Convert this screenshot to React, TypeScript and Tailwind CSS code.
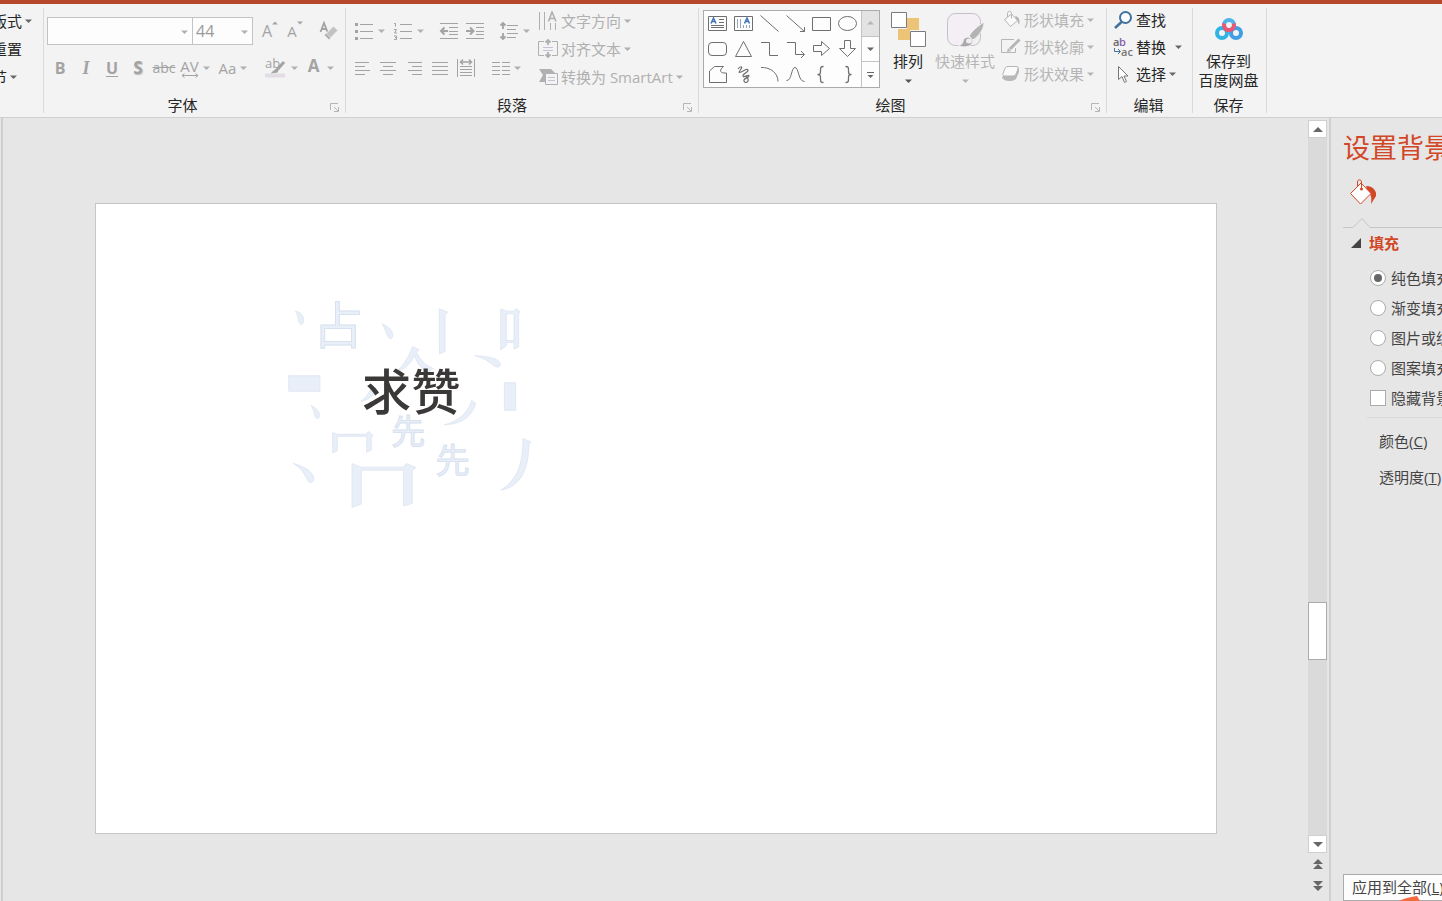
import React from 'react';

type Kids = { children?: React.ReactNode };

function Svg({ w, h, children, className = '' }: { w: number; h: number; className?: string } & Kids) {
  return (
    <svg
      width={w}
      height={h}
      viewBox={`0 0 ${w} ${h}`}
      fill="none"
      stroke="currentColor"
      aria-hidden="true"
      className={`shrink-0 ${className}`}
    >
      {children}
    </svg>
  );
}

function Caret({ className = '' }: { className?: string }) {
  return (
    <Svg w={7} h={4} className={className}>
      <path d="M0 0.5h7l-3.500 3.500z" fill="currentColor" stroke="none" />
    </Svg>
  );
}

function Sep() {
  return <span className="w-px h-6 bg-[#dcdcdc] shrink-0" />;
}

function Group({ label, launcher, className = '', children }: { label: string; launcher?: boolean; className?: string } & Kids) {
  return (
    <section className={`relative flex flex-col shrink-0 border-r border-[#dadada] ${className}`}>
      <div className="flex-1">{children}</div>
      <h2 className="h-4 leading-4 text-center">{label}</h2>
      {launcher && (
        <button aria-label={`${label}设置`} className="absolute right-[5px] bottom-px text-[#b5b5b5]">
          <Svg w={10} h={10}>
            <path d="M0.5 8V1.5H8M4 5l4 4M8.5 5v4.5H4" />
          </Svg>
        </button>
      )}
    </section>
  );
}

function Tool({ label, caret, className = 'w-[26px]', children }: { label: string; caret?: boolean; className?: string } & Kids) {
  return (
    <button aria-label={label} className={`h-6 flex items-center justify-center gap-1 shrink-0 text-[#a3a3a3] ${className}`}>
      {children}
      {caret && <Caret className="text-[#b0b0b0]" />}
    </button>
  );
}

function Row({ text, caret = true, className = '', caretClass = '', children }: { text: string; caret?: boolean; className?: string; caretClass?: string } & Kids) {
  return (
    <button className={`flex items-center gap-[3px] whitespace-nowrap leading-5 ${className}`}>
      {children}
      <span>{text}</span>
      {caret && <Caret className={caretClass} />}
    </button>
  );
}

const BAR_ROWS = [3, 7, 11, 15];

function Bars({ spans }: { spans: [number, number][] }) {
  return (
    <Svg w={18} h={18}>
      {spans.map(([a, b], i) => (
        <path key={i} d={`M${a} ${BAR_ROWS[i] + 0.5}H${b}`} />
      ))}
    </Svg>
  );
}

function FontGroup() {
  return (
    <Group label="字体" launcher className="w-[302px] pr-6">
      <div className="flex items-center pt-[9px] pl-[3px]">
        <div className="relative w-[146px] h-7 border border-[#c3c3c3] bg-[#fdfdfd] shrink-0 text-[#b0b0b0]">
          <select aria-label="字体名称" className="appearance-none w-full h-full px-1">
            <option value="" />
          </select>
          <Caret className="absolute right-1 top-3" />
        </div>
        <div className="relative w-[60px] h-7 border border-l-0 border-[#c3c3c3] bg-[#fdfdfd] shrink-0 text-[#b0b0b0]">
          <select aria-label="字号" className="appearance-none w-full h-full px-[3px] text-base text-[#9a9a9a]">
            <option>44</option>
          </select>
          <Caret className="absolute right-1 top-3" />
        </div>
        <Tool label="增大字号" className="w-[26px] ml-1">
          <span className="flex items-start text-base leading-5 font-medium">
            A
            <Svg w={6} h={4}><path d="M0 3.5L3 0.5 6 3.5z" fill="currentColor" stroke="none" /></Svg>
          </span>
        </Tool>
        <Tool label="减小字号" className="w-6">
          <span className="flex items-start text-[15px] leading-5 font-medium">
            A
            <Svg w={6} h={4}><path d="M0 0.5L3 3.5 6 0.5z" fill="currentColor" stroke="none" /></Svg>
          </span>
        </Tool>
        <span className="ml-1"><Sep /></span>
        <Tool label="清除格式" className="w-9">
          <Svg w={20} h={20}>
            <path d="M1.500 11L5 2l3.500 9M3 8h4.500" strokeWidth="1.800" />
            <path d="M7 12.500L14.500 5l4.500 4.500-7.500 7.500z" fill="#c2c2c2" stroke="#f3f3f3" />
            <path d="M5.500 14l1.500-1.500 4.500 4.500-1.500 1.500z" fill="#adadad" stroke="none" />
          </Svg>
        </Tool>
      </div>
      <div className="flex items-center pt-[11px] pl-[3px]">
        <Tool label="加粗"><b className="text-base">B</b></Tool>
        <Tool label="倾斜"><i className="text-lg font-bold font-['Liberation_Serif',serif]">I</i></Tool>
        <Tool label="下划线"><span className="text-base font-bold underline underline-offset-2">U</span></Tool>
        <Tool label="文字阴影"><b className="text-[17px] [text-shadow:1px_1px_1px_#bbb]">S</b></Tool>
        <Tool label="删除线"><s className="text-sm font-medium">abc</s></Tool>
        <Tool label="字符间距" caret className="w-9">
          <span className="flex flex-col items-center">
            <span className="text-[15px] leading-[14px] font-medium">AV</span>
            <Svg w={18} h={5}><path d="M1 2.500h16M3.500 0.500l-2.500 2 2.500 2M14.500 0.500l2.500 2-2.500 2" /></Svg>
          </span>
        </Tool>
        <Tool label="更改大小写" caret className="w-10"><span className="font-medium">Aa</span></Tool>
        <span className="mx-1"><Sep /></span>
        <Tool label="突出显示" caret className="w-10">
          <Svg w={22} h={22}>
            <text x="0" y="11" fontSize="13" fontWeight="500" fill="currentColor" stroke="none">ab</text>
            <path d="M19 5l-8 9" strokeWidth="3" />
            <path d="M10.500 12.500l-4 3.500 6-1z" fill="currentColor" />
            <path d="M0 18.500h20" stroke="#e2dce4" strokeWidth="4" />
          </Svg>
        </Tool>
        <Tool label="字体颜色" caret className="w-10 gap-2">
          <span className="text-[17px] leading-5 font-bold pb-1">A</span>
        </Tool>
      </div>
    </Group>
  );
}

function ParagraphGroup() {
  return (
    <Group label="段落" launcher className="w-[353px] pr-5">
      <div className="flex pl-1">
        <div className="w-[188px] shrink-0">
          <div className="flex items-center pt-[11px]">
            <Tool label="项目符号" caret className="w-[38px]">
              <Svg w={20} h={18}>
                <path d="M6 2.500h13M6 9.500h13M6 16.500h13" />
                <path d="M1 2.500h3M1 9.500h3M1 16.500h3" strokeWidth="3" />
              </Svg>
            </Tool>
            <Tool label="编号" caret className="w-10">
              <Svg w={20} h={18}>
                <path d="M7 2.500h12M7 9.500h12M7 16.500h12" />
                <path d="M1 1.500h1.500v3M1 7.500h2.500l-2 3.500H4M1 14h2.500v3.500H1M2 15.500h1" />
              </Svg>
            </Tool>
            <span className="mx-1"><Sep /></span>
            <Tool label="减少缩进">
              <Svg w={20} h={18}>
                <path d="M1 1.500h18M10 5.500h9M10 9.500h9M10 12.500h9M1 16.500h18" />
                <path d="M9 9H3M5.500 5.500L2 9l3.500 3.500" strokeWidth="2" />
              </Svg>
            </Tool>
            <Tool label="增加缩进">
              <Svg w={20} h={18}>
                <path d="M1 1.500h18M11 5.500h8M11 9.500h8M11 12.500h8M1 16.500h18" />
                <path d="M1 9h7M5 5.500L8.500 9 5 12.500" strokeWidth="2" />
              </Svg>
            </Tool>
            <span className="mx-1"><Sep /></span>
            <Tool label="行距" caret className="w-9">
              <Svg w={20} h={20}>
                <path d="M8 4.500h11M8 8.500h9M8 12.500h11M8 16.500h9" />
                <path d="M4 2v6M4 12v6M1.500 4.500L4 2l2.500 2.500M1.500 15.500L4 18l2.500-2.500" strokeWidth="1.800" />
              </Svg>
            </Tool>
          </div>
          <div className="flex items-center pt-[13px] pl-0.5">
            <Tool label="左对齐" className="w-5"><Bars spans={[[2, 16], [2, 12], [2, 17], [2, 12]]} /></Tool>
            <Tool label="居中" className="w-8"><Bars spans={[[1, 17], [4, 14], [1, 17], [4, 14]]} /></Tool>
            <Tool label="右对齐" className="w-5"><Bars spans={[[3, 17], [7, 17], [3, 17], [7, 17]]} /></Tool>
            <Tool label="两端对齐" className="w-8"><Bars spans={[[1, 17], [1, 17], [1, 17], [1, 17]]} /></Tool>
            <Tool label="分散对齐" className="w-5">
              <Svg w={20} h={20}>
                <path d="M1.500 1v18M18.500 1v18M4 8.500h12M4 11.500h12M4 14.500h12M4 17.500h12" />
                <path d="M4 4h12M7 1.500L4.500 4 7 6.500M13 1.500L15.500 4 13 6.500" strokeWidth="1.500" />
              </Svg>
            </Tool>
            <span className="ml-2 mr-1"><Sep /></span>
            <Tool label="分栏" caret className="w-9">
              <Svg w={18} h={18}>
                <path d="M0 3.500h8M0 7.500h8M0 11.500h8M0 15.500h8M10 3.500h8M10 7.500h8M10 11.500h8M10 15.500h8" />
              </Svg>
            </Tool>
          </div>
        </div>
        <div className="flex flex-col gap-2 pt-[3px] text-[#b0b0b0]">
          <Row text="文字方向">
            <Svg w={20} h={20}>
              <path d="M1.500 1v18M6.500 1v18M12.500 12v7M17.500 12v7" />
              <path d="M10.500 10.500L14 1l4 9.500M12 7.500h4.500" strokeWidth="1.600" />
            </Svg>
          </Row>
          <Row text="对齐文本">
            <Svg w={20} h={20}>
              <path d="M6 2.500H0.500v14H6M14 2.500h5.500v14H14" />
              <path d="M5 8.500h10M5 11.500h10" stroke="#cdbfd3" />
              <path d="M10 1v5M7.500 3.500L10 1l2.500 2.500M10 13v5M7.500 15.500L10 18l2.500-2.500" strokeWidth="1.800" />
            </Svg>
          </Row>
          <Row text="转换为 SmartArt">
            <Svg w={20} h={20}>
              <path d="M1 2h12l4 4h-6v3H7v6H1l4-7z" fill="#b0b0b0" stroke="none" />
              <path d="M7.500 6.500h12v11h-12z" fill="#f3f3f3" />
              <path d="M10 10.500h7M10 13.500h7" stroke="#cdbfd3" />
            </Svg>
          </Row>
        </div>
      </div>
    </Group>
  );
}

const SHAPES: { name: string; art: React.ReactNode }[] = [
  {
    name: '文本框',
    art: (
      <>
        <path d="M1.500 3.500h18v14h-18z" />
        <path d="M12 6.500h5M12 9.500h5M4 12.500h13M4 14.500h13" />
        <path d="M4 10.500L6.500 5l2.500 5.500M5 8.500h3" stroke="#3f74b5" strokeWidth="1.500" />
      </>
    ),
  },
  {
    name: '竖排文本框',
    art: (
      <>
        <path d="M1.500 3.500h18v14h-18z" />
        <path d="M4.500 6v9M7.500 6v9M10.500 12v3M13.500 12v3M16.500 12v3" stroke="#92a5bd" />
        <path d="M11.500 10.500L14 5l2.500 5.500M12.500 8.500h3" stroke="#3f74b5" strokeWidth="1.500" />
      </>
    ),
  },
  { name: '直线', art: <path d="M1.500 2.500l18 16" /> },
  { name: '箭头', art: <path d="M1.500 2.500l18 16M19.500 14v4.500H15" /> },
  { name: '矩形', art: <path d="M1.500 4.500h18v13h-18z" /> },
  { name: '椭圆', art: <ellipse cx="10.500" cy="10.500" rx="9" ry="7" /> },
  { name: '圆角矩形', art: <rect x="1.500" y="4.500" width="18" height="13" rx="3.500" /> },
  { name: '三角形', art: <path d="M10.500 3.500l8 15h-16z" /> },
  { name: '肘形连接符', art: <path d="M2 4.500h8.500v13H19" /> },
  { name: '肘形箭头', art: <path d="M2 4.500h8.500v12H19M16 13l3.500 3.500L16 20" /> },
  { name: '右箭头', art: <path d="M2.500 7.500h8v-4l8 7-8 7v-4h-8z" /> },
  { name: '下箭头', art: <path d="M7.500 2.500h6v8h5l-8 8-8-8h5z" /> },
  { name: '任意多边形', art: <path d="M2.500 18.500V7l5-4.500h9c-4 3.500-4 6 .5 6.500h2.500v9.500z" /> },
  {
    name: '自由曲线',
    art: <path d="M5 5c2-3 5-3 3 0s-3 4 0 3 6-4 7-2-6 4-5 6 6-2 6 0-6 2-5 5 5 1 4-2-3-3-5-2" strokeWidth="1.200" />,
  },
  { name: '弧形', art: <path d="M2 3.500c10-.5 17 6 17 14" /> },
  { name: '曲线', art: <path d="M1.500 16.500C7 17 6 3.500 10 3.500S13 17.500 19.500 17.500" /> },
  { name: '左大括号', art: <path d="M12.500 2.500c-3 0-3 1-3 4s0 4-3 4c3 0 3 1 3 4s0 4 3 4" strokeWidth="1.300" /> },
  { name: '右大括号', art: <path d="M8.500 2.500c3 0 3 1 3 4s0 4 3 4c-3 0-3 1-3 4s0 4-3 4" strokeWidth="1.300" /> },
];

function DrawingGroup() {
  return (
    <Group label="绘图" launcher className="w-[408px] pr-6">
      <div className="flex pl-1">
        <div className="mt-0.5 flex h-[78px] w-[177px] shrink-0 border border-[#ababab] bg-[#fdfdfd]">
          <div className="grid grid-cols-6 flex-1 text-[#6f6f6f]">
            {SHAPES.map((s) => (
              <button key={s.name} aria-label={s.name} className="flex items-center justify-center">
                <Svg w={21} h={21}>{s.art}</Svg>
              </button>
            ))}
          </div>
          <div className="w-[18px] flex flex-col border-l border-[#c3c3c3] divide-y divide-[#c3c3c3] text-[#666]">
            <button aria-label="上一行" className="flex-1 flex items-center justify-center bg-[#e3e3e3] text-[#b5b5b5]">
              <Caret className="rotate-180" />
            </button>
            <button aria-label="下一行" className="flex-1 flex items-center justify-center"><Caret /></button>
            <button aria-label="其他形状" className="flex-1 flex items-center justify-center">
              <Svg w={7} h={8}>
                <path d="M0 1.500h7" />
                <path d="M0.500 4h6l-3 3z" fill="currentColor" stroke="none" />
              </Svg>
            </button>
          </div>
        </div>
        <button className="ml-2 mt-1 w-10 h-[78px] flex flex-col items-center text-[#555] shrink-0">
          <Svg w={36} h={36}>
            <path d="M17 6h12v12H17zM8 17h12v11H8z" fill="#edc477" stroke="none" />
            <path d="M1.500 0.500h15v15h-15zM20.500 19.500h15v15h-15z" fill="#fff" stroke="#7c7c7c" />
          </Svg>
          <span className="mt-[3px] leading-5 text-[#262626] whitespace-nowrap">排列</span>
          <Caret className="mt-2" />
        </button>
        <button className="ml-1.5 mt-1 w-[62px] h-[78px] flex flex-col items-center text-[#b5b5b5] shrink-0">
          <Svg w={38} h={36}>
            <rect x="1.500" y="1.500" width="33" height="32" rx="8" fill="#f3eff5" stroke="#c4bfc6" />
            <path d="M38 10c-6 4-12 9-15 14l4 4c6-4 10-10 11-16z" fill="#b3b3b3" stroke="#f3f3f3" />
            <path d="M23 25c-5 0-6 3-6 5-1 2-3 4-5 4 7 2 15 1 15-6z" fill="#aaa" stroke="#f3f3f3" />
            <ellipse cx="23" cy="29" rx="3" ry="2.500" fill="#eee" stroke="none" />
          </Svg>
          <span className="mt-[3px] leading-5 whitespace-nowrap">快速样式</span>
          <Caret className="mt-2" />
        </button>
        <div className="ml-[5px] flex flex-col gap-[7px] pt-0.5 text-[#b5b5b5]">
          <Row text="形状填充">
            <Svg w={20} h={20}>
              <path d="M3.500 9.500l7-5.500 6 6.500-7 6z" fill="#fafafa" />
              <path d="M6.500 7V3.500c0-3 4-3 4 0v5" />
              <path d="M14 6c5 1 5 5 4 9-1-2-1-4-3-6z" fill="currentColor" stroke="none" />
            </Svg>
          </Row>
          <Row text="形状轮廓">
            <Svg w={20} h={20}>
              <path d="M13 2.500H0.500v13h14V11" />
              <path d="M18.500 2.500L9 12" strokeWidth="3" />
              <path d="M6 15l1-4 3 3z" fill="currentColor" stroke="none" />
            </Svg>
          </Row>
          <Row text="形状效果">
            <Svg w={20} h={20}>
              <path d="M1 13c1 5 11 5 14 2l3-7V4l-3-2z" fill="#b8b8b8" stroke="none" />
              <path d="M7 2.500h8c2 0 2.500 1 2 2.500l-2 5c-.5 1.500-1.500 2-3 2H4c-2 0-2.500-1-2-2.500l2-5c.5-1.500 1.500-2 3-2z" fill="#fafafa" />
            </Svg>
          </Row>
        </div>
      </div>
    </Group>
  );
}

function EditGroup() {
  return (
    <Group label="编辑" className="w-[86px] pr-0.5">
      <div className="flex flex-col items-start gap-[7px] pt-0.5 pl-1.5">
        <Row text="查找" caret={false}>
          <Svg w={20} h={20}>
            <circle cx="12.500" cy="7.500" r="5.500" fill="#fafcff" stroke="#41719c" strokeWidth="2" />
            <path d="M8.500 12L2 18" stroke="#41719c" strokeWidth="2.500" />
          </Svg>
        </Row>
        <Row text="替换" caretClass="ml-1.5 text-[#666]">
          <Svg w={20} h={20}>
            <g stroke="none" fontSize="11" fontWeight="600">
              <text x="0" y="9" fill="#666">a</text>
              <text x="6" y="9" fill="#8660a9">b</text>
              <text x="8" y="19" fill="#777">ac</text>
            </g>
            <path d="M1.500 11v3.500H7M5 12l2.500 2.500L5 17" stroke="#41719c" />
          </Svg>
        </Row>
        <Row text="选择" caretClass="text-[#666]">
          <Svg w={20} h={20}>
            <path d="M5.500 2.500v13l3.500-3 2.500 6 2-1-2.500-5.500h4z" fill="#fff" stroke="#777" />
          </Svg>
        </Row>
      </div>
    </Group>
  );
}

function SaveGroup() {
  return (
    <Group label="保存" className="w-[74px] pr-0.5">
      <button className="w-full flex flex-col items-center pt-2 leading-[19px]">
        <Svg w={28} h={26} className="mb-2.5">
          <circle cx="14" cy="9" r="5" stroke="#4cb4ea" strokeWidth="4" />
          <circle cx="7" cy="17" r="5" stroke="#2fb4e4" strokeWidth="4" />
          <circle cx="21" cy="17" r="5" stroke="#3f9fe6" strokeWidth="4" />
          <path d="M9.300 7.500a5 5 0 1 0 9.400 0" stroke="#ee5570" strokeWidth="4" />
        </Svg>
        <span>保存到</span>
        <span>百度网盘</span>
      </button>
    </Group>
  );
}

function Ribbon() {
  return (
    <header className="shrink-0 border-t-4 border-t-[#b7472a] border-b border-b-[#cfcfcf] bg-[#f3f3f3] overflow-hidden">
      <div className="flex h-[113px] pt-1 pb-1">
        <section className="w-11 shrink-0 border-r border-[#dadada] overflow-hidden">
          <div className="-ml-2 flex flex-col items-start gap-2 pt-[3px]">
            <Row text="版式" caretClass="text-[#666]" />
            <Row text="重置" caret={false} />
            <Row text="节" caretClass="text-[#666]" />
          </div>
        </section>
        <FontGroup />
        <ParagraphGroup />
        <DrawingGroup />
        <EditGroup />
        <SaveGroup />
      </div>
    </header>
  );
}

/* Loose strokes scattered round the title, in a 870 x 690 box */
function Strokes() {
  return (
    <g fill="#e9eff8" stroke="#d8e1ef" strokeWidth="2">
      <path d="M78 64c18 2 28 18 24 34-4 10-12 8-14-4-2-12-4-20-10-30z" />
      <path d="M338 102c20 8 36 22 32 40-6 12-14 2-18-10-4-12-8-22-14-30z" />
      <path d="M510 57l26 10-8 8v110l-17 8z" />
      <path d="M695 57l17 7h24l5-8 13 10-5 6v100l-14 6v-20h-23v10l-17 13zM712 72v80h23V72z" fillRule="evenodd" />
      <path d="M380 248c26-24 40-50 50-78l20 10-8 8c12 22 26 38 50 48l-14 14c-24-12-36-34-42-52-12 24-28 40-56 50z" />
      <path d="M618 198c40 2 72 8 76 24 0 14-14 12-22 4-14-12-30-22-54-28z" />
      <path d="M58 258h94v47H58zM706 279h34v83h-34z" />
      <path d="M125 348c18 8 28 20 25 34-4 10-12 4-14-6-2-12-6-20-11-28z" />
      <path d="M275 335c14-10 22-22 28-34l14 10c-10 12-24 20-42 24z" />
      <path d="M190 429l14 5h86l8-8 14 12-6 6v38l-14 6v-48h-88v44l-14 6z" />
      <path d="M608 332l12 10c-12 38-40 62-95 64 44-12 72-36 83-74z" />
      <path d="M762 447l24 10-6 8c-2 70-20 126-85 137 50-30 67-78 67-155z" />
      <path d="M72 522c34 8 64 28 61 48-4 16-16 10-22-4-8-18-20-32-39-44z" />
      <path d="M248 522l26 11h126l12-11 28 12-11 10v98l-26 8V542H276v102l-28 10z" />
      <g fontWeight="400" strokeWidth="3">
        <text x="132" y="164" fontSize="150">占</text>
        <text x="366" y="462" fontSize="102">先</text>
        <text x="500" y="551" fontSize="102">先</text>
      </g>
    </g>
  );
}

function Slide() {
  return (
    <div className="w-[86%] aspect-[16/9] border border-[#c6c6c6] bg-white">
      <svg viewBox="0 0 1120 630" className="w-full h-full">
        <svg x="173" y="86" width="290" height="230" viewBox="0 0 870 690">
          <Strokes />
          <text x="278" y="362" fontSize="148" fontWeight="500" fill="#3b3838">求赞</text>
        </svg>
      </svg>
    </div>
  );
}

function ScrollBar() {
  const btn = 'h-[18px] flex items-center justify-center border border-[#cfcfcf] bg-white';
  return (
    <div className="w-[21px] shrink-0 flex flex-col pt-0.5 pb-1 pr-0.5 text-[#666]">
      <div className="flex-1 flex flex-col bg-[#dadada]">
        <button aria-label="向上滚动" className={btn}>
          <Svg w={10} h={5}><path d="M0 5l5-5 5 5z" fill="currentColor" stroke="none" /></Svg>
        </button>
        <div className="grow-[464]" />
        <div className="h-[58px] border border-[#ababab] bg-white" />
        <div className="grow-[175]" />
        <button aria-label="向下滚动" className={btn}>
          <Svg w={10} h={5}><path d="M0 0l5 5 5-5z" fill="currentColor" stroke="none" /></Svg>
        </button>
      </div>
      <button aria-label="上一张幻灯片" className="h-[22px] flex items-center justify-center">
        <Svg w={10} h={10}><path d="M0 5l5-5 5 5zM0 10l5-5 5 5z" fill="currentColor" stroke="none" /></Svg>
      </button>
      <button aria-label="下一张幻灯片" className="h-[22px] flex items-center justify-center">
        <Svg w={10} h={10}><path d="M0 0l5 5 5-5zM0 5l5 5 5-5z" fill="currentColor" stroke="none" /></Svg>
      </button>
    </div>
  );
}

const FILLS = ['纯色填充', '渐变填充', '图片或纹理填充', '图案填充'];

function FormatPane() {
  return (
    <aside className="w-[113px] shrink-0 flex flex-col border-l-2 border-[#d0d0d0] pl-3 overflow-hidden whitespace-nowrap text-[#444]">
      <h1 className="mt-3 text-[27px] leading-9 text-[#d24726]">设置背景格式</h1>
      <button aria-label="填充" className="mt-3 ml-1.5 w-7 text-[#d24726]">
        <Svg w={28} h={28}>
          <path d="M17 8c7 0 11 5 10 10l-5 8c1-7 0-10-4-14z" fill="currentColor" stroke="none" />
          <path d="M1.500 15.500L12 5l10 10.500L11.500 26z" fill="#fff" />
          <path d="M8.500 9V4c0-3 4-3 4 0v6" />
          <circle cx="12.500" cy="11" r="1.500" fill="currentColor" stroke="none" />
        </Svg>
      </button>
      <div className="mt-3 flex items-end text-[#c6c6c6]">
        <Svg w={28} h={10}><path d="M0 9.500h10l9-9 8 9h1" fill="none" /></Svg>
        <span className="flex-1 h-px bg-[#c6c6c6]" />
      </div>
      <h3 className="mt-[5px] ml-2 flex items-center gap-2 leading-5 font-bold text-[#d24726]">
        <Svg w={10} h={10} className="text-[#444]"><path d="M10 0v10H0z" fill="currentColor" stroke="none" /></Svg>
        填充
      </h3>
      <div className="mt-[10px] ml-[27px] flex flex-col">
        {FILLS.map((name, i) => (
          <label key={name} className="h-[30px] flex items-center gap-[5px]">
            <input
              type="radio"
              name="fill"
              defaultChecked={i === 0}
              className="appearance-none w-4 h-4 shrink-0 rounded-full border border-[#ababab] bg-white flex items-center justify-center checked:before:block before:w-2 before:h-2 before:rounded-full checked:before:bg-[#666]"
            />
            {name}
          </label>
        ))}
        <label className="h-[30px] flex items-center gap-[5px]">
          <input type="checkbox" className="appearance-none w-4 h-4 shrink-0 border border-[#ababab] bg-white" />
          隐藏背景图形
        </label>
      </div>
      <div className="mt-1 ml-6 border-t border-[#dadada] pl-3 pt-[11px]">
        <p className="leading-6">颜色(<u>C</u>)</p>
        <p className="mt-3 leading-6">透明度(<u>T</u>)</p>
      </div>
      <div className="relative mt-auto">
        <button className="h-[27px] w-40 border border-[#ababab] bg-[#fdfdfd] pl-2 text-left">应用到全部(<u>L</u>)</button>
        <Svg w={22} h={5} className="absolute left-[56px] bottom-0">
          <path d="M0 5C6 2 12 1 18 0l3 5z" fill="#f26a3d" stroke="none" />
        </Svg>
      </div>
    </aside>
  );
}

export default function App() {
  return (
    <div className="h-screen flex flex-col overflow-hidden bg-[#e6e6e6] text-[15px] text-[#262626] font-['Open_Sans','Noto_Sans_CJK_SC',sans-serif]">
      <Ribbon />
      <div className="flex-1 min-h-0 flex">
        <main className="flex-1 min-w-0 ml-px border-l-2 border-[#cfcfcf] flex items-center justify-center pt-[18px] pl-px">
          <Slide />
        </main>
        <ScrollBar />
        <FormatPane />
      </div>
    </div>
  );
}
